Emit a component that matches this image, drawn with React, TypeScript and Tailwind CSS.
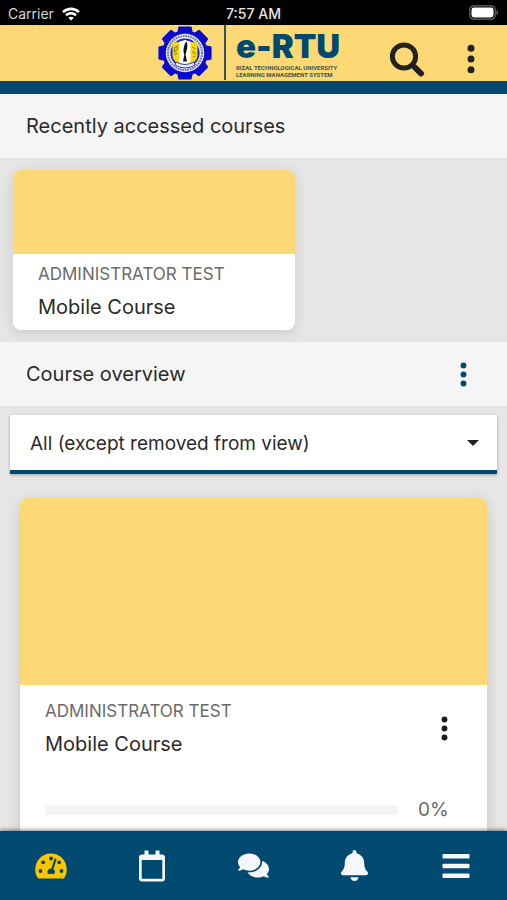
import type { ReactNode } from "react";
import { FaBell, FaComments } from "react-icons/fa";

function StatusBar() {
  return (
    <div className="grid h-[25px] shrink-0 grid-cols-3 items-center bg-black px-2 text-[14px] leading-5 text-[#d6d6d6]">
      <div className="flex items-center gap-2 pt-0.5">
        <span>Carrier</span>
        <svg viewBox="0 0 18 14" className="h-[14px] w-[18px]" fill="none" stroke="white" strokeWidth="2.6" aria-hidden="true">
          <path d="M1 5.2C5.5.7 12.5.7 17 5.2" />
          <path d="M4 8.3C6.8 5.6 11.2 5.6 14 8.3" />
          <path d="M9 13.5 6.3 10.8C7.8 9.5 10.2 9.5 11.7 10.8Z" fill="white" stroke="none" />
        </svg>
      </div>
      <span className="pt-0.5 text-center font-medium text-[#e6e6e6]">7:57 AM</span>
      <svg viewBox="0 0 30 15" className="h-[15px] w-[30px] justify-self-end" aria-label="Battery full" role="img">
        <rect x=".8" y=".8" width="25.4" height="13.4" rx="4" fill="none" stroke="#6b6b6b" strokeWidth="1.2" />
        <rect x="2.5" y="2.5" width="22" height="10" rx="2.4" fill="white" />
        <path d="M27.5 5.2c2 .7 2 3.9 0 4.6z" fill="#777" />
      </svg>
    </div>
  );
}

function Seal() {
  const teeth = [0, 45, 90, 135, 180, 225, 270, 315];
  return (
    <svg viewBox="0 0 54 54" className="h-[54px] w-[54px] shrink-0" role="img" aria-label="University seal">
      <g fill="#0b0bd0">
        <circle cx="27" cy="27" r="22.6" />
        {teeth.map((angle) => (
          <path key={angle} d="M19 8 20.3 1.3Q20.5.4 21.4.4H32.600Q33.500.4 33.700 1.300L35 8z" transform={`rotate(${angle} 27 27)`} />
        ))}
      </g>
      <circle cx="27" cy="27" r="19.2" fill="#e4e4ee" />
      <circle cx="27" cy="27" r="17" fill="none" stroke="#6a7390" strokeWidth="2" strokeDasharray="1.6 .9" />
      <circle cx="27" cy="27" r="14.6" fill="#2222d4" />
      <path d="M14.500 16.500q6.500 0 12.500-2.500 6 2.500 12.500 2.500v13q0 7-12.500 11-12.500-4-12.500-11z" fill="#f3d90f" />
      <path d="M21.500 15.500q3-.4 5.500-1.500 2.500 1.100 5.500 1.500V36q-2.500 2-5.500 3-3-1-5.500-3z" fill="white" />
      <path d="M28.500 15.500c2 4 0 10-1 13l1.500 7h-4l1.300-7C24.500 25 26 18 28.500 15.500z" fill="#111" />
      <path d="m16.500 22 3-2v3l-3 3zM16.500 29l3-2M34.500 21l3 2M34.500 25l3 3M35 31l2-1" fill="none" stroke="#a89000" strokeWidth="1.2" />
      <path d="M18 36q9 5 18 0l1 3q-10 6-20 0z" fill="#edf0ff" stroke="#1010d8" strokeWidth=".8" />
    </svg>
  );
}

function Logo() {
  return (
    <div className="flex h-[55px] items-center">
      <Seal />
      <div className="ml-3 h-[55px] w-0.5 bg-[#31535a]" />
      <div className="ml-2.5 flex w-[105px] flex-col text-[#004a72]">
        <span className="text-[33px] leading-[36px] font-black">e-RTU</span>
        <span className="font-['Roboto','Liberation_Sans',sans-serif] text-[6px] leading-[7px] font-bold whitespace-nowrap text-[#3f5545]">
          RIZAL TECHNOLOGICAL UNIVERSITY
          <br />
          LEARNING MANAGEMENT SYSTEM
        </span>
      </div>
    </div>
  );
}

function Dots({ large = false }: { large?: boolean }) {
  return (
    <svg viewBox="0 0 8 30" className={large ? "h-[30px] w-2" : "h-[25px] w-[7px]"} fill="currentColor" aria-hidden="true">
      <circle cx="4" cy="4.2" r="3.5" />
      <circle cx="4" cy="15" r="3.5" />
      <circle cx="4" cy="25.8" r="3.5" />
    </svg>
  );
}

function Header() {
  return (
    <header className="grid h-[69px] shrink-0 grid-cols-[1fr_auto_1fr] border-b-[13px] border-[#004a72] bg-[#fdd976] pr-2">
      <div />
      <Logo />
      <div className="flex items-center justify-end gap-6 pt-3 pr-2 text-[#222]">
        <button type="button" aria-label="Search" className="flex h-10 w-10 items-center justify-center">
          <svg viewBox="0 0 36 36" className="h-9 w-9 shrink-0" fill="none" stroke="currentColor" aria-hidden="true">
            <circle cx="15" cy="15.5" r="11.6" strokeWidth="5" />
            <path d="m23.5 24 8.5 8.500" strokeWidth="5" />
            <path d="m26.500 27 5.500 5.500" strokeWidth="6" strokeLinecap="round" />
          </svg>
        </button>
        <button type="button" aria-label="More options" className="flex h-10 w-10 items-center justify-center">
          <Dots large />
        </button>
      </div>
    </header>
  );
}

function SectionHeader({ title, children }: { title: string; children?: ReactNode }) {
  return (
    <div className="flex h-16 items-center justify-between bg-[#f5f5f5] pr-6 pl-[26px]">
      <h2 className="text-[20px] leading-6">{title}</h2>
      {children}
    </div>
  );
}

function CourseTitle() {
  return (
    <div>
      <p className="text-[17px] leading-6 text-[#6b6b6b]">ADMINISTRATOR TEST</p>
      <h3 className="mt-2 text-[20px] leading-[26px]">Mobile Course</h3>
    </div>
  );
}

function Tab({ label, children, active = false }: { label: string; children: ReactNode; active?: boolean }) {
  return (
    <button
      type="button"
      aria-label={label}
      className={`flex flex-1 items-center justify-center ${active ? "text-[#fdc500]" : "text-[#f5f7fa]"}`}
    >
      {children}
    </button>
  );
}

function TabBar() {
  return (
    <nav className="z-10 flex h-[69px] shrink-0 bg-[#004a72] shadow-[0_-1px_4px_rgba(0,0,0,0.5)]">
      <Tab label="Dashboard" active>
        <svg viewBox="0 0 32 26" className="h-[26px] w-8" aria-hidden="true">
          <path d="M3 25.500C1 22.500.3 20 .3 16.500.3 7.500 7 .5 16 .5s15.700 7 15.700 16c0 3.500-.7 6-2.700 9z" fill="currentColor" />
          <g fill="#004a72">
            <circle cx="16" cy="5.5" r="1.9" />
            <circle cx="8.2" cy="9.3" r="1.9" />
            <circle cx="24.2" cy="9.3" r="1.9" />
            <circle cx="5.5" cy="18" r="1.9" />
            <circle cx="26.5" cy="18" r="1.9" />
            <path d="m19.700 5.300 1.900.6-3.100 10.300c2 1.500 1.900 3.300.5 4.800h-6c-1.500-2.600.2-5.300 3.400-5.400z" />
          </g>
        </svg>
      </Tab>
      <Tab label="Calendar">
        <svg viewBox="0 0 28 32" className="h-8 w-7" aria-hidden="true">
          <path fillRule="evenodd" d="M6.500 1q0-.6.600-.6h2.800q.6 0 .6.600v3.500h7V1q0-.6.600-.6h2.800q.6 0 .6.600v3.500H24q3 0 3 3v21q0 3-3 3H4q-3 0-3-3v-21q0-3 3-3h2.500zM3.700 10v18.700h20.600V10z" fill="currentColor" />
        </svg>
      </Tab>
      <Tab label="Messages"><FaComments size={31} /></Tab>
      <Tab label="Notifications"><FaBell size={31} /></Tab>
      <Tab label="Menu">
        <svg viewBox="0 0 28 26" className="h-[26px] w-7" fill="currentColor" aria-hidden="true">
          <rect x=".5" y="1" width="27" height="4.6" rx=".7" />
          <rect x=".5" y="10.7" width="27" height="4.6" rx=".7" />
          <rect x=".5" y="20.4" width="27" height="4.6" rx=".7" />
        </svg>
      </Tab>
    </nav>
  );
}

export default function App() {
  return (
    <div className="flex h-screen flex-col overflow-hidden bg-[#e6e6e6] font-['Inter','Liberation_Sans',sans-serif] text-[#2b2b2b]">
      <StatusBar />
      <Header />
      <main className="min-h-0 flex-1 overflow-y-auto [scrollbar-width:none]">
        <section>
          <SectionHeader title="Recently accessed courses" />
          <div className="px-[13px] py-3">
            <article className="w-[282px] overflow-hidden rounded-lg bg-white shadow-[0_3px_14px_rgba(0,0,0,0.12)]">
              <div className="h-[84px] bg-[#fdd976]" />
              <div className="px-[25px] pt-2 pb-[10px]">
                <CourseTitle />
              </div>
            </article>
          </div>
        </section>
        <section>
          <SectionHeader title="Course overview">
            <button type="button" aria-label="Course overview options" className="flex h-10 w-10 items-center justify-center text-[#004a72]">
              <Dots />
            </button>
          </SectionHeader>
          <div className="relative mx-[10px] mt-[9px] h-[59px] border-b-4 border-[#004a72] bg-white shadow-[0_1px_3px_rgba(0,0,0,0.3)]">
            <select aria-label="Filter courses" className="h-full w-full appearance-none bg-transparent pt-0.5 pr-12 pl-5 text-[19px] leading-6 outline-none">
              <option>All (except removed from view)</option>
            </select>
            <svg viewBox="0 0 12 6" className="pointer-events-none absolute top-[25px] right-[18px] h-1.5 w-3" aria-hidden="true">
              <path d="M0 0h12L6 6z" fill="#222" />
            </svg>
          </div>
          <div className="px-5 pt-6 pb-5">
            <article className="overflow-hidden rounded-lg bg-white shadow-[0_3px_14px_rgba(0,0,0,0.14)]">
              <div className="h-[187px] bg-[#fdd976]" />
              <div className="px-[25px] pt-3.5 pb-8">
                <div className="flex items-center justify-between">
                  <CourseTitle />
                  <button type="button" aria-label="Course options" className="-mr-0.5 flex h-10 w-10 items-center justify-center text-[#1c1c1c]">
                    <Dots />
                  </button>
                </div>
                <div className="mt-[41px] flex items-center gap-5">
                  <div role="progressbar" aria-label="Course progress" aria-valuenow={0} aria-valuemin={0} aria-valuemax={100} className="h-2.5 flex-1 bg-[#f5f5f5]" />
                  <span className="w-11 text-[19px] leading-6 text-[#6b6b6b]">0%</span>
                </div>
              </div>
            </article>
          </div>
        </section>
      </main>
      <TabBar />
    </div>
  );
}
